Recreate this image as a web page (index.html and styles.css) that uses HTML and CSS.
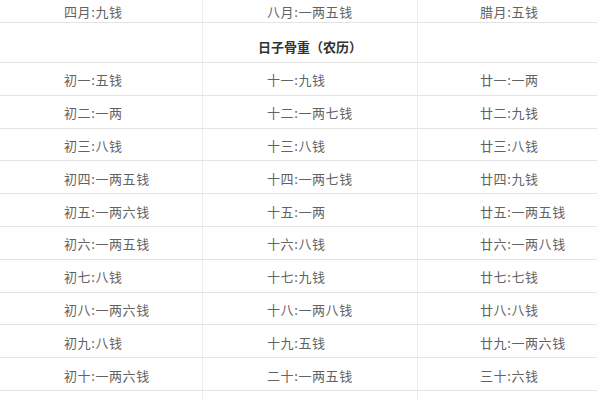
FILE: index.html
```html
<!DOCTYPE html>
<html lang="zh-CN">
<head>
<meta charset="utf-8">
<link rel="stylesheet" href="styles.css">
</head>
<body>
<div class="table">
  <div class="cell top c1">四月:九钱</div>
  <div class="cell top c2">八月:一两五钱</div>
  <div class="cell top c3">腊月:五钱</div>

  <div class="cell head c1"></div>
  <div class="cell head c2">日子骨重（农历）</div>
  <div class="cell head c3"></div>

  <div class="cell c1">初一:五钱</div><div class="cell c2">十一:九钱</div><div class="cell c3">廿一:一两</div>
  <div class="cell c1">初二:一两</div><div class="cell c2">十二:一两七钱</div><div class="cell c3">廿二:九钱</div>
  <div class="cell c1">初三:八钱</div><div class="cell c2">十三:八钱</div><div class="cell c3">廿三:八钱</div>
  <div class="cell c1">初四:一两五钱</div><div class="cell c2">十四:一两七钱</div><div class="cell c3">廿四:九钱</div>
  <div class="cell c1">初五:一两六钱</div><div class="cell c2">十五:一两</div><div class="cell c3">廿五:一两五钱</div>
  <div class="cell c1">初六:一两五钱</div><div class="cell c2">十六:八钱</div><div class="cell c3">廿六:一两八钱</div>
  <div class="cell c1">初七:八钱</div><div class="cell c2">十七:九钱</div><div class="cell c3">廿七:七钱</div>
  <div class="cell c1">初八:一两六钱</div><div class="cell c2">十八:一两八钱</div><div class="cell c3">廿八:八钱</div>
  <div class="cell c1">初九:八钱</div><div class="cell c2">十九:五钱</div><div class="cell c3">廿九:一两六钱</div>
  <div class="cell c1">初十:一两六钱</div><div class="cell c2">二十:一两五钱</div><div class="cell c3">三十:六钱</div>
  <div class="cell tail c1"></div><div class="cell tail c2"></div><div class="cell tail c3"></div>
</div>
</body>
</html>
```
FILE: styles.css
```css
html, body {
  margin: 0;
  padding: 0;
  background: #ffffff;
}

body {
  width: 600px;
  height: 400px;
  overflow: hidden;
  font-family: "Noto Sans CJK SC", "Noto Sans", sans-serif;
}

.table {
  display: grid;
  grid-template-columns: 203px 215px 179px;
  width: 597px;
}

.cell {
  box-sizing: border-box;
  height: 32.8px;
  display: flex;
  align-items: center;
  padding-left: 64px;
  padding-top: 2px;
  border-bottom: 1px solid #e4e4e4;
  font-size: 13px;
  letter-spacing: 0.6px;
  color: #626262;
  white-space: nowrap;
}

.c1,
.c2 {
  border-right: 1px solid #ececec;
}

.c3 {
  padding-left: 62px;
}

.top {
  height: 23px;
  padding-top: 0;
}

.head {
  height: 40px;
  padding-top: 7px;
}

.head.c2 {
  justify-content: center;
  padding-left: 0;
  font-size: 13px;
  font-weight: 700;
  letter-spacing: 0;
  color: #333333;
}

.tail {
  height: 9px;
  border-bottom: none;
}
```
